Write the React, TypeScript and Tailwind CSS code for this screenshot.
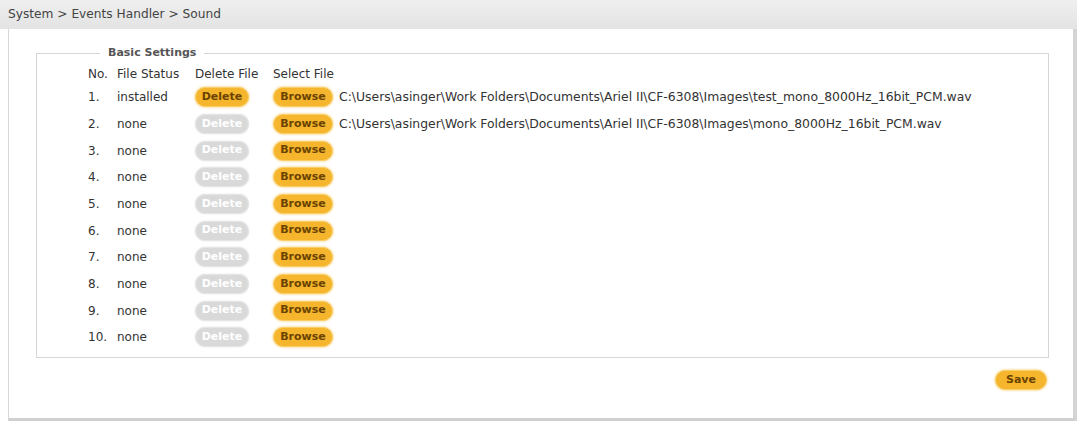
import React from "react";

const files: Record<number, string> = {
  1: "C:\\Users\\asinger\\Work Folders\\Documents\\Ariel II\\CF-6308\\Images\\test_mono_8000Hz_16bit_PCM.wav",
  2: "C:\\Users\\asinger\\Work Folders\\Documents\\Ariel II\\CF-6308\\Images\\mono_8000Hz_16bit_PCM.wav",
};

function Btn({ label, disabled, w }: { label: string; disabled?: boolean; w: string }) {
  return (
    <div
      className={
        disabled
          ? `${w} h-[20px] rounded-full bg-[#d9d9d9] border border-[#e6e6e6] text-white text-[11px] font-bold flex items-center justify-center shadow-[0_0_2px_#e0e0e0]`
          : `${w} h-[20px] rounded-full bg-[#f5b52c] border border-[#f9cf6a] text-[#6b4300] text-[11px] font-bold flex items-center justify-center shadow-[0_0_3px_#f7c65a]`
      }
    >
      {label}
    </div>
  );
}

export default function App() {
  const rows = Array.from({ length: 10 }, (_, i) => i + 1);
  return (
    <div
      className="w-[1082px] h-[423px] bg-white text-[#333] text-[12px]"
      style={{ fontFamily: "'DejaVu Sans', 'Liberation Sans', sans-serif" }}
    >
      <div className="w-[1077px] h-[423px] flex flex-col">
        <div className="h-[29px] bg-gradient-to-b from-[#efefef] to-[#e3e3e3] pl-[8px] flex items-center text-[#444] text-[12.2px]">
          System &gt; Events Handler &gt; Sound
        </div>
        <div className="flex-1 ml-[8px] mb-[2px] border-l border-[#d8d8d8] border-r-[4px] border-r-[#d4d4d4] border-b-[3px] border-b-[#d0d0d0] bg-white pt-[16px] pl-[27px] pr-[24px] flex flex-col">
          <fieldset className="border border-[#d6d6d6] h-[313px] pl-[51px] pt-[2px]">
            <legend className="ml-[12px] px-[8px] text-[11px] font-bold text-[#555]">Basic Settings</legend>
            <div className="grid grid-cols-[29px_78px_78px_66px_1fr] items-center">
              <div className="h-[20px] flex items-center">No.</div>
              <div className="h-[20px] flex items-center">File Status</div>
              <div className="h-[20px] flex items-center">Delete File</div>
              <div className="h-[20px] flex items-center">Select File</div>
              <div className="h-[20px]" />
              {rows.map((n) => {
                const h = n === 1 ? "h-[27px]" : "h-[26.7px]";
                return (
                  <React.Fragment key={n}>
                    <div className={`${h} flex items-center`}>{n}.</div>
                    <div className={`${h} flex items-center`}>{n === 1 ? "installed" : "none"}</div>
                    <div className={`${h} flex items-center`}>
                      <Btn label="Delete" disabled={n !== 1} w="w-[54px]" />
                    </div>
                    <div className={`${h} flex items-center`}>
                      <Btn label="Browse" w="w-[60px]" />
                    </div>
                    <div className={`${h} flex items-center whitespace-nowrap text-[12.4px]`}>
                      {files[n] ?? ""}
                    </div>
                  </React.Fragment>
                );
              })}
            </div>
          </fieldset>
          <div className="flex justify-end mt-[12px] mr-[2px]">
            <Btn label="Save" w="w-[52px]" />
          </div>
        </div>
      </div>
    </div>
  );
}
